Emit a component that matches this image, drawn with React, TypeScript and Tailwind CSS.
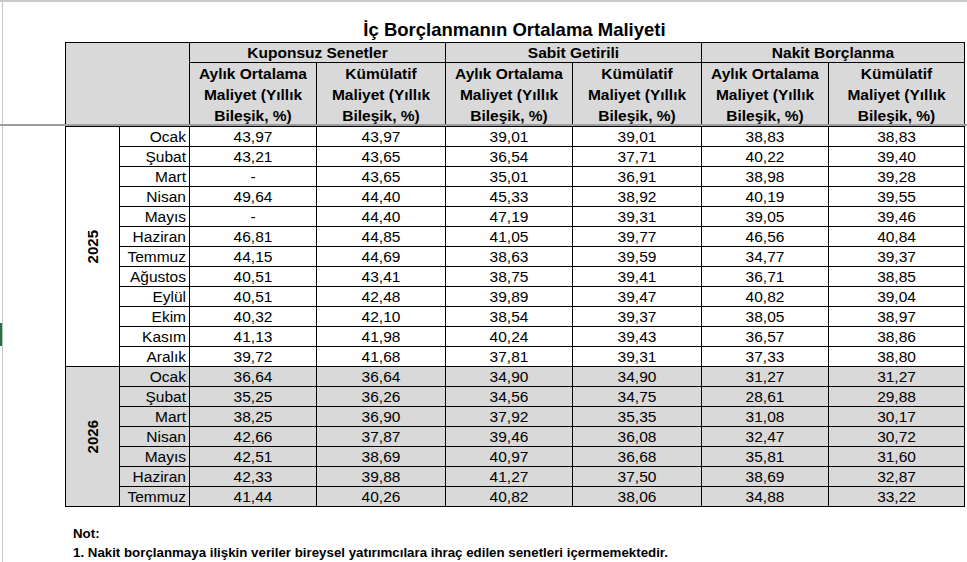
import React from "react";

const rows2025: string[][] = [
  ["Ocak", "43,97", "43,97", "39,01", "39,01", "38,83", "38,83"],
  ["Şubat", "43,21", "43,65", "36,54", "37,71", "40,22", "39,40"],
  ["Mart", "-", "43,65", "35,01", "36,91", "38,98", "39,28"],
  ["Nisan", "49,64", "44,40", "45,33", "38,92", "40,19", "39,55"],
  ["Mayıs", "-", "44,40", "47,19", "39,31", "39,05", "39,46"],
  ["Haziran", "46,81", "44,85", "41,05", "39,77", "46,56", "40,84"],
  ["Temmuz", "44,15", "44,69", "38,63", "39,59", "34,77", "39,37"],
  ["Ağustos", "40,51", "43,41", "38,75", "39,41", "36,71", "38,85"],
  ["Eylül", "40,51", "42,48", "39,89", "39,47", "40,82", "39,04"],
  ["Ekim", "40,32", "42,10", "38,54", "39,37", "38,05", "38,97"],
  ["Kasım", "41,13", "41,98", "40,24", "39,43", "36,57", "38,86"],
  ["Aralık", "39,72", "41,68", "37,81", "39,31", "37,33", "38,80"],
];

const rows2026: string[][] = [
  ["Ocak", "36,64", "36,64", "34,90", "34,90", "31,27", "31,27"],
  ["Şubat", "35,25", "36,26", "34,56", "34,75", "28,61", "29,88"],
  ["Mart", "38,25", "36,90", "37,92", "35,35", "31,08", "30,17"],
  ["Nisan", "42,66", "37,87", "39,46", "36,08", "32,47", "30,72"],
  ["Mayıs", "42,51", "38,69", "40,97", "36,68", "35,81", "31,60"],
  ["Haziran", "42,33", "39,88", "41,27", "37,50", "38,69", "32,87"],
  ["Temmuz", "41,44", "40,26", "40,82", "38,06", "34,88", "33,22"],
];

function SubHead({ first }: { first: string }) {
  return (
    <th className="border border-black p-0 h-[63px] font-bold text-center align-middle leading-[21px]">
      {first}
      <br />
      Maliyet (Yıllık
      <br />
      Bileşik, %)
    </th>
  );
}

function YearBlock({ year, rows, grey }: { year: string; rows: string[][]; grey: boolean }) {
  const bg = grey ? "bg-[#d9d9d9]" : "bg-white";
  return (
    <>
      {rows.map((r, i) => (
        <tr key={year + i} className={bg}>
          {i === 0 && (
            <td rowSpan={rows.length} className="border border-black p-0 align-middle">
              <div className="flex items-center justify-center">
                <span className="[writing-mode:vertical-rl] rotate-180 font-bold text-[15px] leading-[20px]">
                  {year}
                </span>
              </div>
            </td>
          )}
          <td className="border border-black p-0 pr-[3px] h-[20px] text-right leading-[19px]">{r[0]}</td>
          {r.slice(1).map((v, j) => (
            <td key={j} className="border border-black p-0 h-[20px] text-center leading-[19px]">
              {v}
            </td>
          ))}
        </tr>
      ))}
    </>
  );
}

export default function App() {
  return (
    <div className="relative w-[967px] h-[562px] overflow-hidden bg-white border-t-2 border-[#c9c9c9] text-black font-['Liberation_Sans',Arial,sans-serif]">
      <div className="ml-[2px] h-full border-l border-[#c4c4c4]">
        <div className="ml-[62px] w-[899px]">
          <div className="pt-[16px] h-[40px] text-center font-bold text-[18.5px] leading-[24px]">
            İç Borçlanmanın Ortalama Maliyeti
          </div>
          <table className="table-fixed border-collapse w-[899px] text-[15.5px]">
            <colgroup>
              <col className="w-[54px]" />
              <col className="w-[70px]" />
              <col className="w-[127px]" />
              <col className="w-[129px]" />
              <col className="w-[127px]" />
              <col className="w-[129px]" />
              <col className="w-[127px]" />
              <col className="w-[136px]" />
            </colgroup>
            <thead className="bg-[#d9d9d9]">
              <tr>
                <th colSpan={2} rowSpan={2} className="border border-black p-0"></th>
                <th colSpan={2} className="border border-black p-0 h-[20px] font-bold leading-[19px]">Kuponsuz Senetler</th>
                <th colSpan={2} className="border border-black p-0 h-[20px] font-bold leading-[19px]">Sabit Getirili</th>
                <th colSpan={2} className="border border-black p-0 h-[20px] font-bold leading-[19px]">Nakit Borçlanma</th>
              </tr>
              <tr>
                <SubHead first="Aylık Ortalama" />
                <SubHead first="Kümülatif" />
                <SubHead first="Aylık Ortalama" />
                <SubHead first="Kümülatif" />
                <SubHead first="Aylık Ortalama" />
                <SubHead first="Kümülatif" />
              </tr>
            </thead>
            <tbody>
              <YearBlock year="2025" rows={rows2025} grey={false} />
              <YearBlock year="2026" rows={rows2026} grey={true} />
            </tbody>
          </table>
        </div>
        <div className="pl-[70px] pt-[17px] font-bold text-[13.3px] leading-[19px]">
          <div>Not:</div>
          <div>1. Nakit borçlanmaya ilişkin veriler bireysel yatırımcılara ihraç edilen senetleri içermemektedir.</div>
        </div>
      </div>
      <div className="absolute left-0 right-0 top-[122px] h-[2px] bg-[#9e9e9e]"></div>
      <div className="absolute left-0 top-[321px] w-[2px] h-[23px] bg-[#217346]"></div>
    </div>
  );
}
